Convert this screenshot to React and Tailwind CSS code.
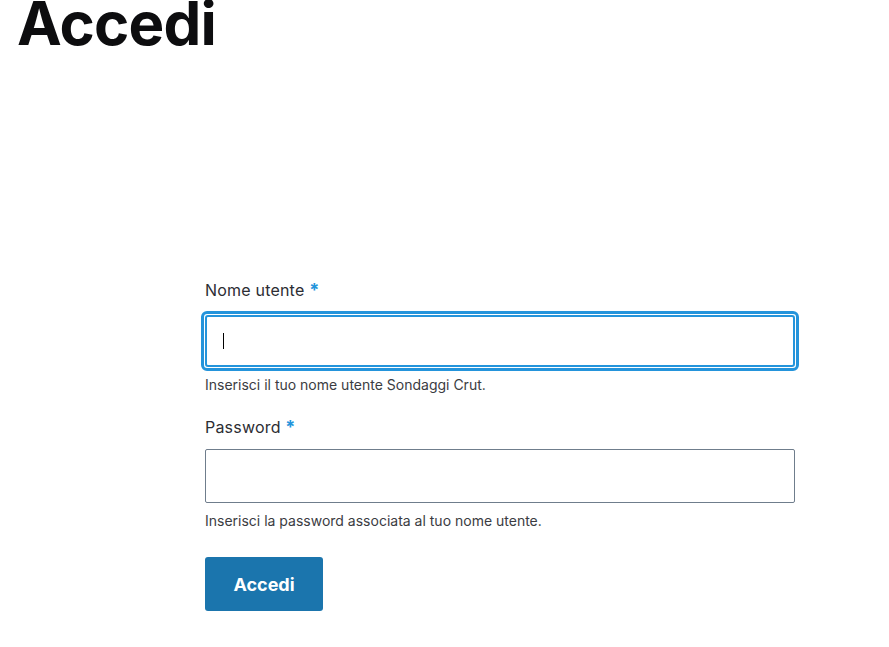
export default function App() {
  return (
    <div className="min-h-[647px] bg-white text-[#232429]" style={{ fontFamily: "Inter, 'Noto Sans', sans-serif" }}>
      <h1 className="mt-[-7px] pl-[17px] text-[60px] font-bold leading-none tracking-[-0.8px] text-[#0d0d0f]">
        Accedi
      </h1>
      <form className="ml-[205px] mt-[227px] flex w-[590px] flex-col">
        <label className="text-[16px] leading-5 tracking-[0.2px] text-[#2c2d33]">
          Nome utente <span className="text-[18px] font-bold text-[#2494db]">*</span>
        </label>
        <div className="-mx-1 mt-[11px] rounded-[6px] border-[3px] border-[#2494db] p-px">
          <div className="flex h-[52px] items-center rounded-[3px] border-2 border-[#2494db] px-[16px]">
            <span className="h-4 w-px bg-black" />
          </div>
        </div>
        <p className="mt-[4px] text-[14px] leading-5 text-[#3b3c42]">
          Inserisci il tuo nome utente Sondaggi Crut.
        </p>
        <label className="mt-[22px] text-[16px] leading-5 tracking-[0.2px] text-[#2c2d33]">
          Password <span className="text-[18px] font-bold text-[#2494db]">*</span>
        </label>
        <input
          type="password"
          className="mt-[12px] h-[54px] w-full rounded-[2px] border border-[#6f7d8c] bg-white outline-none"
        />
        <p className="mt-[8px] text-[14px] leading-5 text-[#3b3c42]">
          Inserisci la password associata al tuo nome utente.
        </p>
        <button
          type="button"
          className="mt-[26px] h-[54px] w-[118px] rounded-[3px] bg-[#1b75ad] text-[18px] font-bold text-white"
        >
          Accedi
        </button>
      </form>
    </div>
  );
}
